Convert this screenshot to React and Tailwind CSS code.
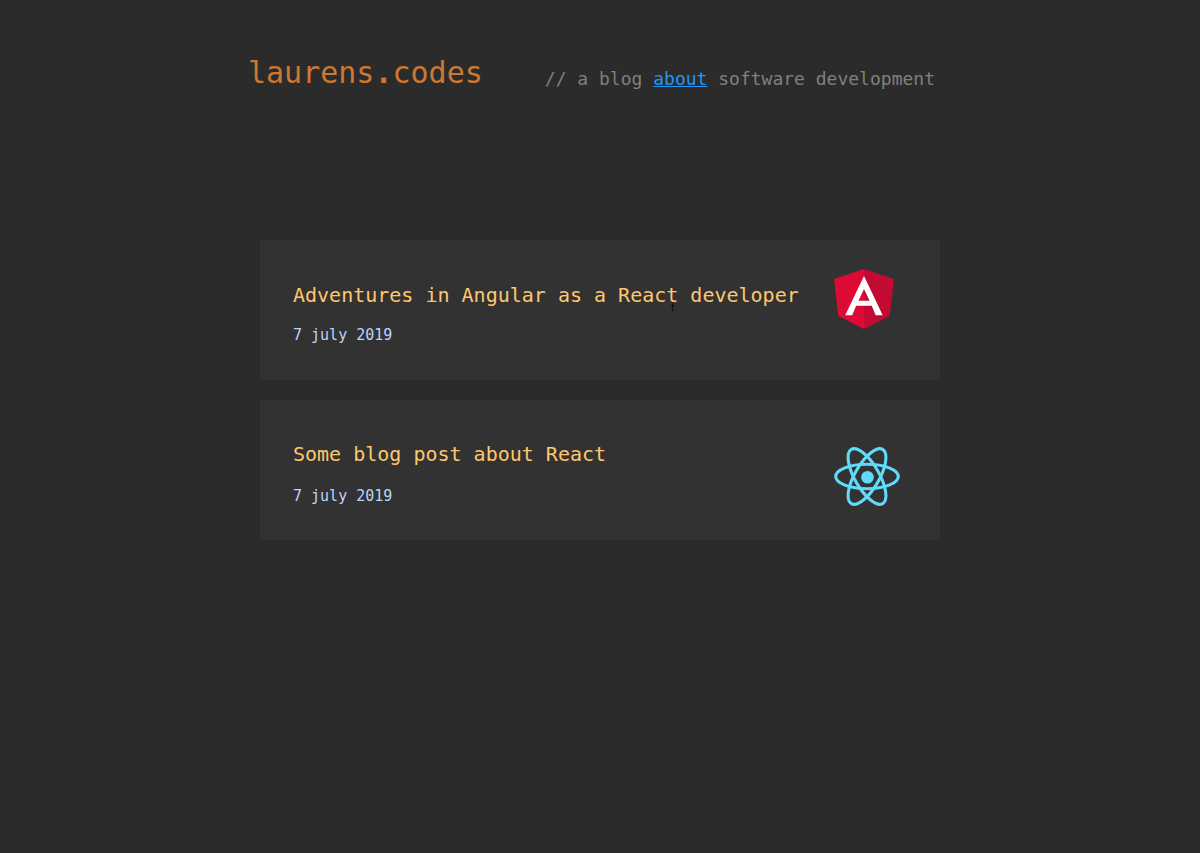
function AngularLogo() {
  return (
    <svg viewBox="0 0 60 60" className="h-[60px] w-[60px]" aria-hidden="true">
      <path fill="#dd0a35" d="M30 0 0 10l4.3 37L30 60Z" />
      <path fill="#c30a32" d="M30 0v60l25.7-13L60 10Z" />
      <path
        fill="#fff"
        fillRule="evenodd"
        d="M30 7 11.2 46.300h7l3.900-9.600h15.600L41.700 46.300h7Zm0 13 5.600 11.700H24.500Z"
      />
    </svg>
  );
}

function ReactLogo() {
  return (
    <svg viewBox="-33 -30 66 60" className="h-[60px] w-[66px]" aria-hidden="true">
      <circle r="6.3" cx="0.500" cy="0.300" fill="#61dafb" />
      <g fill="none" stroke="#61dafb" strokeWidth="3.100" transform="translate(0 -0.500)">
        <ellipse rx="31.300" ry="12.200" />
        <ellipse rx="31.300" ry="12.200" transform="rotate(60)" />
        <ellipse rx="31.300" ry="12.200" transform="rotate(120)" />
      </g>
    </svg>
  );
}

const posts = [
  {
    title: 'Adventures in Angular as a React developer',
    date: '7 july 2019',
    Logo: AngularLogo,
    textClass: 'gap-[18px]',
    logoClass: 'pt-[29px]',
    pointer: true,
  },
  {
    title: 'Some blog post about React',
    date: '7 july 2019',
    Logo: ReactLogo,
    textClass: 'gap-5',
    logoClass: 'pt-[47px]',
  },
];

function TextPointer() {
  return (
    <svg
      viewBox="0 0 4 8"
      className="pointer-events-none absolute right-[124px] top-5 h-2 w-1"
      aria-hidden="true"
    >
      <path d="M1.5 0v7.500H3.500M0 2.500h3.500" fill="none" stroke="#111" />
    </svg>
  );
}

function PostCard({ title, date, Logo, textClass, logoClass, pointer }) {
  return (
    <article className="flex min-h-[140px] justify-between bg-[#323232] pl-[33px]">
      <div className={`flex flex-col justify-center pt-[7px] ${textClass}`}>
        <h2 className="relative text-[20px] leading-6 text-[#ffc66d]">
          <a href="#post">{title}</a>
          {pointer && <TextPointer />}
        </h2>
        <time dateTime="2019-07-07" className="text-[15px] leading-5 text-[#bbd4fa]">
          {date}
        </time>
      </div>
      <div className={`w-[106px] shrink-0 ${logoClass}`}>
        <Logo />
      </div>
    </article>
  );
}

export default function App() {
  return (
    <div className="min-h-screen bg-[#2b2b2b] pb-12 font-['DejaVu_Sans_Mono',monospace]">
      <div className="mx-auto max-w-[704px] pt-[53px]">
        <header className="flex flex-wrap items-end gap-x-[62px]">
          <h1 className="text-[30px] leading-10 text-[#cc7832]">
            laurens<span className="font-bold">.</span>codes
          </h1>
          <p className="text-[18px] leading-7 text-[#808080]">
            // a blog{' '}
            <a href="#about" className="text-[#2196f3] underline">
              about
            </a>{' '}
            software development
          </p>
        </header>
        <main className="mt-[147px] flex flex-col gap-5 px-3">
          {posts.map((post) => (
            <PostCard key={post.title} {...post} />
          ))}
        </main>
      </div>
    </div>
  );
}
